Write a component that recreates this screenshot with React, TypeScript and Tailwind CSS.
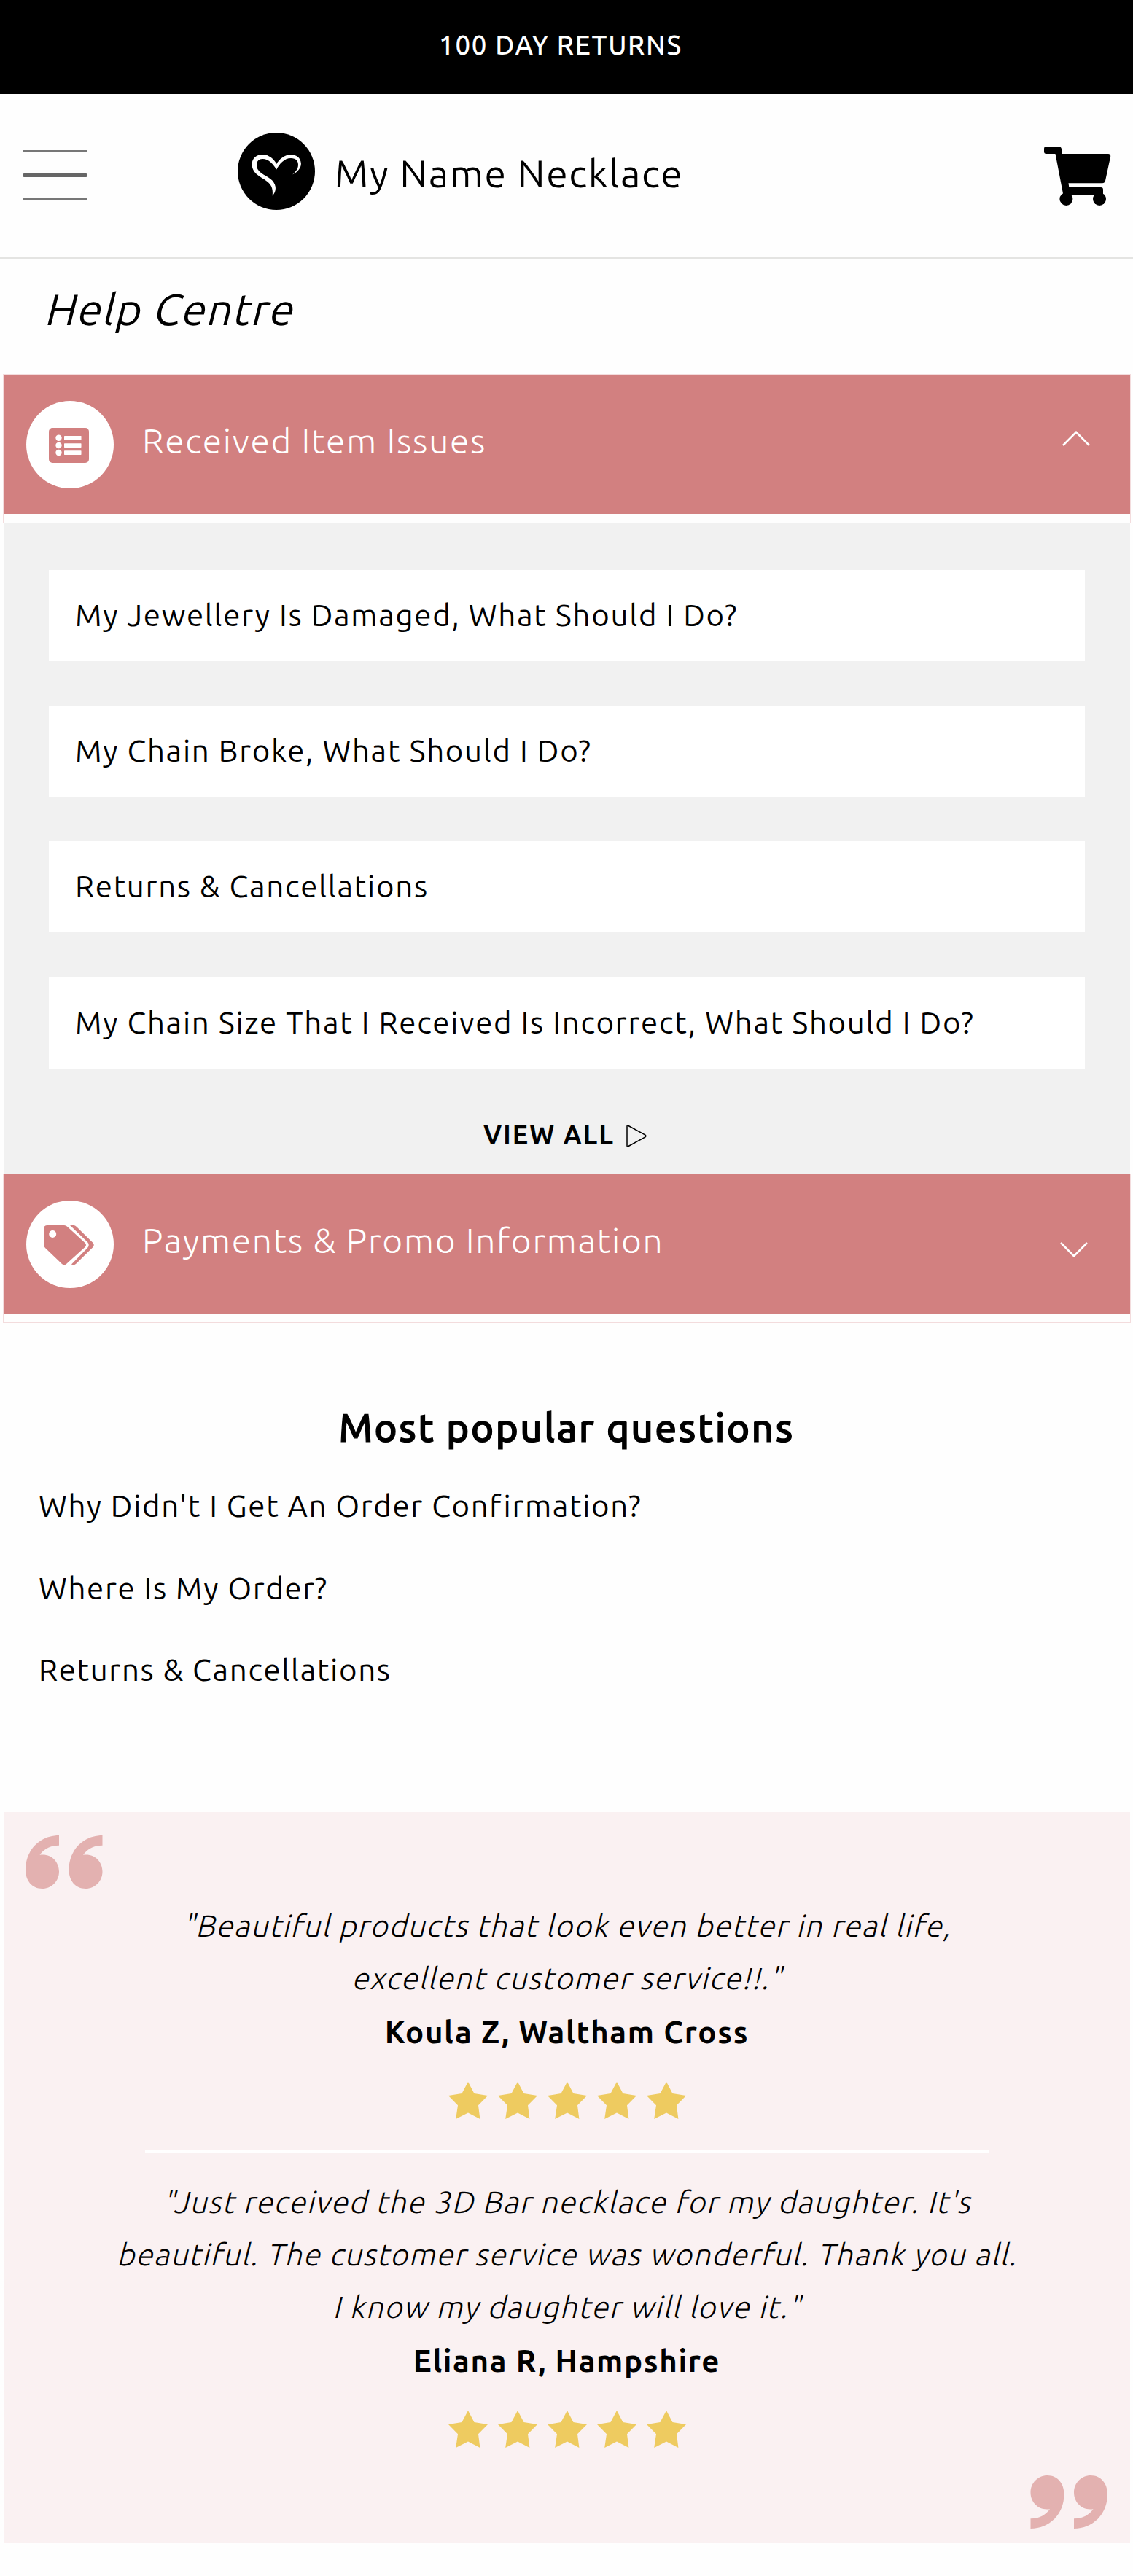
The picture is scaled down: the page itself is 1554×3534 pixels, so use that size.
import type { ReactNode } from "react";

const cards = [
  "My Jewellery Is Damaged, What Should I Do?",
  "My Chain Broke, What Should I Do?",
  "Returns & Cancellations",
  "My Chain Size That I Received Is Incorrect, What Should I Do?",
];

const popular = [
  "Why Didn't I Get An Order Confirmation?",
  "Where Is My Order?",
  "Returns & Cancellations",
];

function Logo() {
  return (
    <svg viewBox="0 0 106 106" className="size-[106px] shrink-0">
      <circle cx="53" cy="53" r="53" fill="#000" />
      <path
        d="M75 57.500C83 54 87.200 48 86.900 42C86 33.500 80 30.300 73 30.300C64 30.300 57 36.500 53.300 43C50 36.500 43 30 34 30C25 30 19.300 36 19.600 44C20 53 26 57.500 33 62C42 67.500 49.500 72 47.600 86.500C54 80 53.500 70 45 63.500C37 57.500 26 54 26 45C26 39 29 36 34 36C43 36 49 44 53.300 50.500C57 43 64 35 73 35C80 35 83 39 83 44C83 50 79 54 75 57.500Z"
        fill="#fff"
      />
    </svg>
  );
}

function Cart() {
  return (
    <svg viewBox="0 0 92 81" className="h-[81px] w-[92px] shrink-0" fill="#000">
      <path d="M3 0H20Q23.500 0 24 3.500L24.800 10H88Q92 10.500 91 14.500L84 47Q83 50.300 80 50.300H33.500L34.300 56H78Q81 56 81 59V66H26.300L15.500 10H3Q0 10 0 7V3Q0 0 3 0Z" />
      <circle cx="30.4" cy="72" r="9" />
      <circle cx="76" cy="72" r="9" />
    </svg>
  );
}

function ListIcon() {
  return (
    <svg viewBox="0 0 55 48" className="mt-[3px] mr-[4px] h-[48px] w-[55px]">
      <rect width="55" height="48" rx="5" fill="#d28080" />
      <g fill="#fff">
        <circle cx="13.500" cy="13.700" r="4.200" />
        <circle cx="13.500" cy="24" r="4.200" />
        <circle cx="13.500" cy="34" r="4.200" />
        <rect x="21" y="11" width="23.500" height="5.700" rx="0.600" />
        <rect x="21" y="21.200" width="23.500" height="5.700" rx="0.600" />
        <rect x="21" y="31.200" width="23.500" height="5.700" rx="0.600" />
      </g>
    </svg>
  );
}

function TagsIcon() {
  return (
    <svg viewBox="0 0 69 55" className="mt-[3px] mr-[3px] h-[55px] w-[69px]" fill="#d28080">
      <path
        fillRule="evenodd"
        d="M5 0H28Q30.500 0 32.500 2L56.500 24Q59.500 27 56.500 30L31 53Q28 55.500 25 53L2 31Q0 29 0 26V5Q0 0 5 0ZM12.200 7A5 5 0 1 0 12.200 17A5 5 0 1 0 12.200 7Z"
      />
      <path d="M36 0H41Q43 0 45 2L67.500 24Q70 27 67.500 30L44 53Q41 55.500 38 53.500L60 31Q63.500 27 60 23Z" />
    </svg>
  );
}

function QuoteMark({ className }: { className: string }) {
  return (
    <svg viewBox="0 0 106 73" className={className} fill="#e3b1b0">
      <path d="M46 0V13.700C34 13.700 25 19 19.500 26.800C35 24.500 46 36 46 49.500C46 63 35.500 73 23 73C9 73 0 62 0 47C0 20 20 0 46 0Z" />
      <path d="M105.500 0V13.700C93.500 13.700 84.500 19 79 26.800C94.500 24.500 105.500 36 105.500 49.500C105.500 63 95 73 82.500 73C68.500 73 59.500 62 59.500 47C59.500 20 79.500 0 105.500 0Z" />
    </svg>
  );
}

function Stars() {
  return (
    <div className="flex h-[51px] justify-center gap-[14px]">
      {[0, 1, 2, 3, 4].map((n) => (
        <svg key={n} viewBox="0 0 54 51" className="h-[51px] w-[54px]">
          <path
            fill="#eecb60"
            d="M27 0L35.400 16.100L54 19L41 32.300L43.400 51L27 42.500L10.200 51L13 32.300L0 19L18.500 16.100Z"
          />
        </svg>
      ))}
    </div>
  );
}

function Banner({
  icon,
  title,
  chevron,
}: {
  icon: ReactNode;
  title: string;
  chevron: ReactNode;
}) {
  return (
    <div className="mr-[3px] ml-[4px] h-[205px] border border-[#f3dcdd] bg-[#fefefe]">
      <div className="flex h-[191px] items-center bg-[#d28080] pl-[31px]">
        <div className="flex size-[120px] shrink-0 items-center justify-center rounded-full bg-white">
          {icon}
        </div>
        <h2 className="mb-[11px] ml-[39px] text-[48px] leading-[60px] font-light tracking-[1.7px] whitespace-nowrap text-white">
          {title}
        </h2>
        {chevron}
      </div>
    </div>
  );
}

function Review({ lines, author }: { lines: string[]; author: string }) {
  return (
    <div className="text-center text-[42px] leading-[72px] tracking-[1.65px]">
      <blockquote className="font-light tracking-[1.58px]">
        {lines.map((line) => (
          <p key={line} className="origin-[50%_51px] -skew-x-14 whitespace-nowrap">
            {line}
          </p>
        ))}
      </blockquote>
      <p className="mt-[2px] mb-[32px] font-bold">{author}</p>
      <Stars />
    </div>
  );
}

export default function App() {
  return (
    <div className="h-[3534px] w-[1554px] overflow-hidden bg-[#fefefe] font-['Ubuntu','Noto_Sans',sans-serif] text-black">
      <div className="flex h-[129px] items-center justify-center bg-black pr-[16px] pb-[5px] text-[36.5px] font-medium tracking-[1.7px] text-white">
        100 DAY RETURNS
      </div>

      <header className="flex h-[226px] items-center border-b-2 border-[#e4e4e2] pr-[30px] pl-[31px]">
        <button className="mb-[2px] flex h-[69px] w-[89px] flex-col justify-between">
          <span className="h-[3px] w-full bg-[#777]" />
          <span className="h-[5px] w-full rounded-xs bg-[#666]" />
          <span className="h-[3px] w-full bg-[#777]" />
        </button>
        <div className="mb-[12px] ml-[206px] flex items-center">
          <Logo />
          <span className="mt-[3px] ml-[27px] text-[53.3px] leading-[60px] tracking-[1.65px] whitespace-nowrap">
            My Name Necklace
          </span>
        </div>
        <div className="ml-auto">
          <Cart />
        </div>
      </header>

      <h1 className="mb-[20px] h-[138px] origin-[50%_91px] -skew-x-14 pl-[60px] text-[60px] leading-[138px] tracking-[1.7px]">
        Help Centre
      </h1>

      <Banner
        icon={<ListIcon />}
        title="Received Item Issues"
        chevron={
          <svg viewBox="0 0 38 21" className="mr-[55px] mb-[17px] ml-auto h-[21px] w-[38px]">
            <path d="M1 20L19 1.800L37 20" fill="none" stroke="#fff" strokeWidth="2.600" />
          </svg>
        }
      />

      <section className="mr-[4px] ml-[5px] flex h-[892px] flex-col bg-[#f1f1f1] pt-[64px] pr-[62px] pl-[62px]">
        <div className="flex flex-col gap-[61.2px]">
          {cards.map((c) => (
            <a
              key={c}
              className="flex h-[125px] items-center bg-white pb-[2px] pl-[36px] text-[42px] tracking-[1.7px] whitespace-nowrap"
            >
              {c}
            </a>
          ))}
        </div>
        <a className="mt-[66px] flex h-[50px] items-center justify-center gap-[16px] pr-[5px] text-[36px] font-bold tracking-[1.9px]">
          VIEW ALL
          <svg viewBox="0 0 28 31" className="mt-[3px] h-[31px] w-[28px]">
            <path
              d="M1 2.500Q1 0 3 1.500L26 14Q27.800 15.500 26 17L3 29.500Q1 31 1 28.500Z"
              fill="none"
              stroke="#000"
              strokeWidth="1.500"
            />
          </svg>
        </a>
      </section>

      <Banner
        icon={<TagsIcon />}
        title="Payments & Promo Information"
        chevron={
          <svg viewBox="0 0 38 21" className="mt-[15px] mr-[58px] ml-auto h-[21px] w-[38px]">
            <path d="M1 1L19 19.200L37 1" fill="none" stroke="#fff" strokeWidth="2.600" />
          </svg>
        }
      />

      <section>
        <h2 className="mt-[108px] text-center text-[53.3px] leading-[70px] font-medium tracking-[2.2px] [-webkit-text-stroke:1.2px_#000]">
          Most popular questions
        </h2>
        <ul className="mt-[17px] pl-[53px] text-[42px] leading-[112.6px] tracking-[1.65px]">
          {popular.map((p) => (
            <li key={p}>{p}</li>
          ))}
        </ul>
      </section>

      <section className="relative mt-[138px] mr-[4px] ml-[5px] h-[1003px] bg-[#faf1f2] pt-[120px]">
        <QuoteMark className="absolute top-[32px] left-[30px] h-[73px] w-[106px]" />
        <Review
          lines={[
            '"Beautiful products that look even better in real life,',
            'excellent customer service!!."',
          ]}
          author="Koula Z, Waltham Cross"
        />
        <hr className="mx-auto mt-[42px] mb-[31px] h-[5px] w-[1157px] border-0 bg-white" />
        <Review
          lines={[
            "\"Just received the 3D Bar necklace for my daughter. It's",
            "beautiful. The customer service was wonderful. Thank you all.",
            'I know my daughter will love it."',
          ]}
          author="Eliana R, Hampshire"
        />
        <QuoteMark className="absolute right-[31px] bottom-[20px] h-[73px] w-[106px] rotate-180" />
      </section>
    </div>
  );
}
